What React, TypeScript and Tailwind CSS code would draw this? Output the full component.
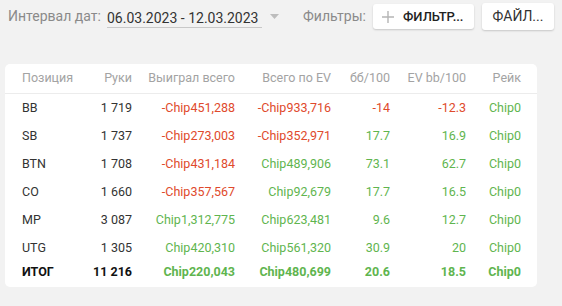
import React from "react";

type Row = {
  pos: string;
  hands: string;
  won: string;
  ev: string;
  bb: string;
  evbb: string;
  rake: string;
};

const rows: Row[] = [
  { pos: "BB", hands: "1 719", won: "-Chip451,288", ev: "-Chip933,716", bb: "-14", evbb: "-12.3", rake: "Chip0" },
  { pos: "SB", hands: "1 737", won: "-Chip273,003", ev: "-Chip352,971", bb: "17.7", evbb: "16.9", rake: "Chip0" },
  { pos: "BTN", hands: "1 708", won: "-Chip431,184", ev: "Chip489,906", bb: "73.1", evbb: "62.7", rake: "Chip0" },
  { pos: "CO", hands: "1 660", won: "-Chip357,567", ev: "Chip92,679", bb: "17.7", evbb: "16.5", rake: "Chip0" },
  { pos: "MP", hands: "3 087", won: "Chip1,312,775", ev: "Chip623,481", bb: "9.6", evbb: "12.7", rake: "Chip0" },
  { pos: "UTG", hands: "1 305", won: "Chip420,310", ev: "Chip561,320", bb: "30.9", evbb: "20", rake: "Chip0" },
];

const total: Row = {
  pos: "ИТОГ",
  hands: "11 216",
  won: "Chip220,043",
  ev: "Chip480,699",
  bb: "20.6",
  evbb: "18.5",
  rake: "Chip0",
};

const cols = "grid grid-cols-[58px_52px_103px_96px_59px_76px_55px] items-center";

function tone(v: string) {
  return v.startsWith("-") ? "text-[#e04a2c]" : "text-[#5fb54f]";
}

function Cells({ r }: { r: Row }) {
  return (
    <>
      <div>{r.pos}</div>
      <div className="text-right">{r.hands}</div>
      <div className={`text-right ${tone(r.won)}`}>{r.won}</div>
      <div className={`text-right ${tone(r.ev)}`}>{r.ev}</div>
      <div className={`text-right ${tone(r.bb)}`}>{r.bb}</div>
      <div className={`text-right ${tone(r.evbb)}`}>{r.evbb}</div>
      <div className="text-right text-[#5fb54f]">{r.rake}</div>
    </>
  );
}

export default function App() {
  return (
    <div
      className="w-[562px] h-[306px] overflow-hidden bg-[#f2f2f2]"
      style={{ fontFamily: "Roboto, 'Liberation Sans', sans-serif" }}
    >
      {/* top bar */}
      <div className="h-[33px] flex items-center pl-2 whitespace-nowrap">
        <span className="w-[91px] shrink-0 text-[14px] text-[#8a8a8a]">Интервал дат:</span>
        <span className="ml-2 w-[155px] shrink-0 text-[14px] text-[#333] leading-[18px] border-b border-[#c8c8c8] mt-[3px]">
          06.03.2023 - 12.03.2023
        </span>
        <svg className="ml-2 shrink-0" width="9" height="5" viewBox="0 0 9 5">
          <path d="M0 0h9L4.5 5z" fill="#bdbdbd" />
        </svg>
        <span className="ml-6 w-[61px] shrink-0 text-[14px] text-[#8a8a8a]">Фильтры:</span>
        <button className="ml-[9px] h-[25px] w-[101px] shrink-0 flex items-center pl-[9px] bg-white rounded-[3px] shadow-[0_1px_2px_rgba(0,0,0,0.18)]">
          <svg width="12" height="12" viewBox="0 0 12 12">
            <path d="M6 0v12M0 6h12" stroke="#b5b5b5" strokeWidth="1.4" />
          </svg>
          <span className="ml-[9px] text-[13px] font-medium text-[#222]">ФИЛЬТР...</span>
        </button>
        <button className="ml-2 h-[27px] w-[72px] shrink-0 flex items-center justify-center bg-white rounded-[3px] shadow-[0_1px_2px_rgba(0,0,0,0.18)] text-[14px] text-[#333]">
          ФАЙЛ...
        </button>
        <div className="ml-2 h-[22px] w-[6px] flex flex-col gap-[3px] shrink-0">
          <div className="h-[7px] border-l border-[#999]" />
          <div className="h-[9px] border-l-2 border-[#4caf50]" />
        </div>
      </div>

      {/* table card */}
      <div className="mt-[31px] ml-[5px] w-[532px] bg-white rounded-[5px] pb-[5px] text-[12.5px] text-[#333]">
        <div className={`${cols} h-[30px] pl-[17px] border-b border-[#ececec] text-[#a3a3a3]`}>
          <div>Позиция</div>
          <div className="text-right">Руки</div>
          <div className="text-right">Выиграл всего</div>
          <div className="text-right">Всего по EV</div>
          <div className="text-right">бб/100</div>
          <div className="text-right">EV bb/100</div>
          <div className="text-right">Рейк</div>
        </div>
        {rows.map((r) => (
          <div key={r.pos} className={`${cols} h-[28px] pl-[17px] pt-[1px]`}>
            <Cells r={r} />
          </div>
        ))}
        <div className={`${cols} h-[20px] pl-[17px] font-bold text-[#111]`}>
          <Cells r={total} />
        </div>
      </div>
    </div>
  );
}
